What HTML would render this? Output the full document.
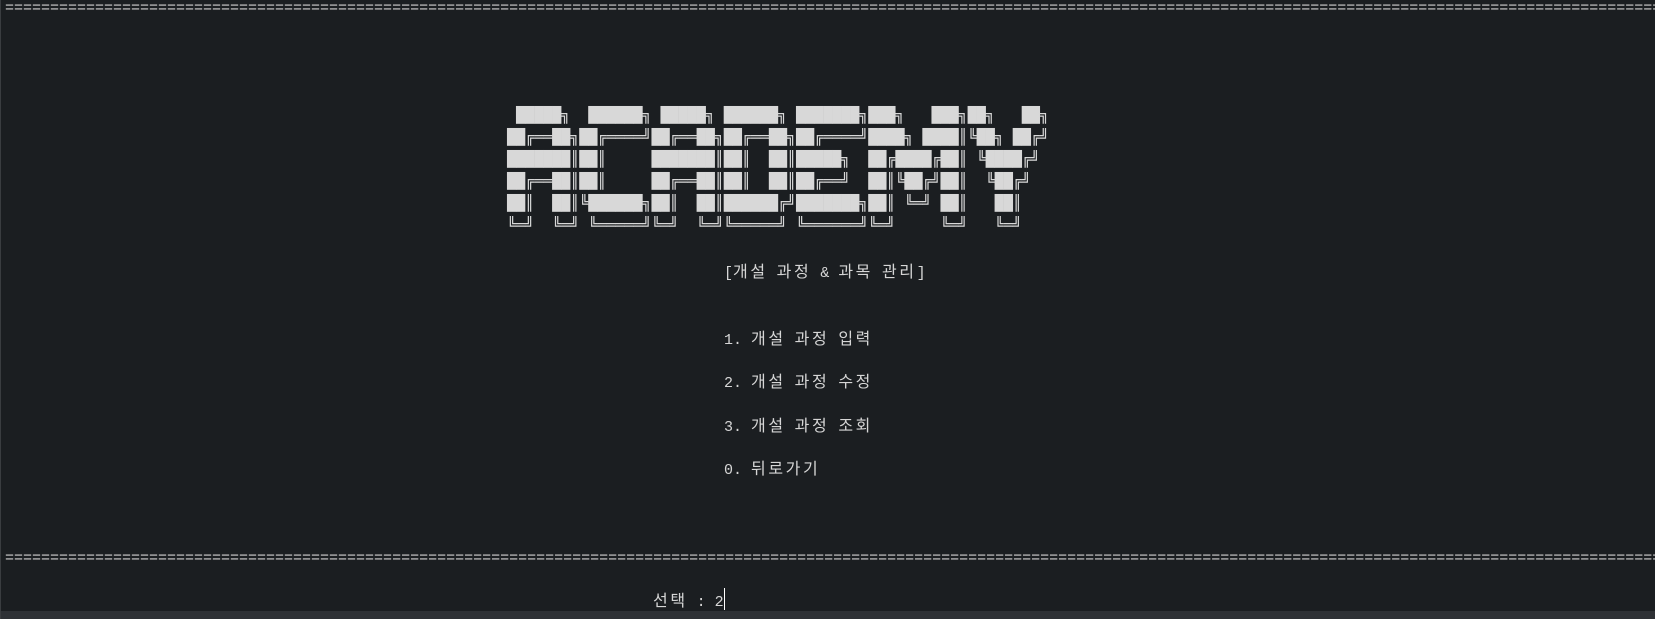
<!DOCTYPE html>
<html><head><meta charset="utf-8"><style>
html,body{margin:0;padding:0;background:#1b1e21;width:1655px;height:619px;overflow:hidden;position:relative}
body{border-left:1px solid #3a3d40;box-sizing:border-box}
.t{position:absolute;white-space:pre;font-family:"Liberation Mono","DejaVu Sans Mono",monospace;font-size:15px;color:#d6d6d6;line-height:22px}
.k{font-family:"Noto Sans CJK KR","NanumGothic",sans-serif;font-size:16px;letter-spacing:2.6px}
.logo{position:absolute;left:506px;top:104px;white-space:pre;font-family:"DejaVu Sans Mono",monospace;font-size:15px;line-height:22px;color:#d8d8d8;letter-spacing:0}
.eq{position:absolute;left:4px;white-space:pre;font-family:"Liberation Mono",monospace;font-size:15px;color:#d0d0d0;line-height:16px;overflow:hidden;width:1650px}
.bar{position:absolute;left:0;top:611px;width:1655px;height:8px;background:#2e3135}
.cur{position:absolute;left:723px;top:588px;width:1px;height:22px;background:#fff}
</style></head><body>
<div class="eq" style="top:1px">===========================================================================================================================================================================================</div>
<div class="logo"> █████╗  ██████╗ █████╗ ██████╗ ███████╗███╗   ███╗██╗   ██╗
██╔══██╗██╔════╝██╔══██╗██╔══██╗██╔════╝████╗ ████║╚██╗ ██╔╝
███████║██║     ███████║██║  ██║█████╗  ██╔████╔██║ ╚████╔╝ 
██╔══██║██║     ██╔══██║██║  ██║██╔══╝  ██║╚██╔╝██║  ╚██╔╝  
██║  ██║╚██████╗██║  ██║██████╔╝███████╗██║ ╚═╝ ██║   ██║   
╚═╝  ╚═╝ ╚═════╝╚═╝  ╚═╝╚═════╝ ╚══════╝╚═╝     ╚═╝   ╚═╝   </div>
<div class="t" style="left:723px;top:259px">[<span class="k">개설</span> <span class="k">과정</span> &amp; <span class="k">과목</span> <span class="k">관리</span>]</div>
<div class="t" style="left:723px;top:326px">1. <span class="k">개설</span> <span class="k">과정</span> <span class="k">입력</span></div>
<div class="t" style="left:723px;top:369px">2. <span class="k">개설</span> <span class="k">과정</span> <span class="k">수정</span></div>
<div class="t" style="left:723px;top:413px">3. <span class="k">개설</span> <span class="k">과정</span> <span class="k">조회</span></div>
<div class="t" style="left:723px;top:456px">0. <span class="k">뒤로가기</span></div>
<div class="eq" style="top:551px">===========================================================================================================================================================================================</div>
<div class="t" style="left:652px;top:588px"><span class="k">선택</span> : 2</div>
<div class="cur"></div>
<div class="bar"></div>
</body></html>
